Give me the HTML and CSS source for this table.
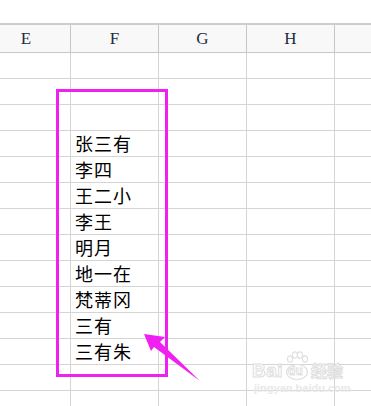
FILE: index.html
```html
<!DOCTYPE html>
<html lang="zh">
<head>
<meta charset="utf-8">
<link rel="stylesheet" href="styles.css">
</head>
<body>
<div class="sheet">
  <div class="topbar"></div>
  <div class="row head">
    <div class="cell c1">E</div>
    <div class="cell c2">F</div>
    <div class="cell c3">G</div>
    <div class="cell c4">H</div>
    <div class="cell c5"></div>
  </div>
  <div class="row"><div class="cell c1"></div><div class="cell c2"></div><div class="cell c3"></div><div class="cell c4"></div><div class="cell c5"></div></div>
  <div class="row"><div class="cell c1"></div><div class="cell c2"></div><div class="cell c3"></div><div class="cell c4"></div><div class="cell c5"></div></div>
  <div class="row"><div class="cell c1"></div><div class="cell c2"></div><div class="cell c3"></div><div class="cell c4"></div><div class="cell c5"></div></div>
  <div class="row"><div class="cell c1"></div><div class="cell c2 txt">张三有</div><div class="cell c3"></div><div class="cell c4"></div><div class="cell c5"></div></div>
  <div class="row"><div class="cell c1"></div><div class="cell c2 txt">李四</div><div class="cell c3"></div><div class="cell c4"></div><div class="cell c5"></div></div>
  <div class="row"><div class="cell c1"></div><div class="cell c2 txt">王二小</div><div class="cell c3"></div><div class="cell c4"></div><div class="cell c5"></div></div>
  <div class="row"><div class="cell c1"></div><div class="cell c2 txt">李王</div><div class="cell c3"></div><div class="cell c4"></div><div class="cell c5"></div></div>
  <div class="row"><div class="cell c1"></div><div class="cell c2 txt">明月</div><div class="cell c3"></div><div class="cell c4"></div><div class="cell c5"></div></div>
  <div class="row"><div class="cell c1"></div><div class="cell c2 txt">地一在</div><div class="cell c3"></div><div class="cell c4"></div><div class="cell c5"></div></div>
  <div class="row"><div class="cell c1"></div><div class="cell c2 txt">梵蒂冈</div><div class="cell c3"></div><div class="cell c4"></div><div class="cell c5"></div></div>
  <div class="row"><div class="cell c1"></div><div class="cell c2 txt">三有</div><div class="cell c3"></div><div class="cell c4"></div><div class="cell c5"></div></div>
  <div class="row"><div class="cell c1"></div><div class="cell c2 txt">三有朱</div><div class="cell c3"></div><div class="cell c4"></div><div class="cell c5"></div></div>
  <div class="row"><div class="cell c1"></div><div class="cell c2"></div><div class="cell c3"></div><div class="cell c4"></div><div class="cell c5"></div></div>
  <div class="row"><div class="cell c1"></div><div class="cell c2"></div><div class="cell c3"></div><div class="cell c4"></div><div class="cell c5"></div></div>

  <div class="highlight"></div>
  <svg class="arrow" width="371" height="406" viewBox="0 0 371 406">
    <polygon points="144,334 165,337 160,342 200,381 154,347 151,351" fill="#f020f0"/>
  </svg>
  <div class="watermark">
    <div class="wm-top">
      <span class="wm-bai">Bai</span>
      <span class="wm-paw">
        <svg width="24" height="30" viewBox="0 0 24 30">
          <g fill="none" stroke="#e0e0e0" stroke-width="1.2">
            <ellipse cx="5" cy="8" rx="2.6" ry="3.2"/>
            <ellipse cx="10" cy="4" rx="2.6" ry="3.2"/>
            <ellipse cx="15" cy="4" rx="2.6" ry="3.2"/>
            <ellipse cx="20" cy="8" rx="2.6" ry="3.2"/>
            <ellipse cx="12" cy="21" rx="10.5" ry="7.5"/>
          </g>
        </svg>
        <span class="wm-du">du</span>
      </span>
      <span class="wm-jy">经验</span>
    </div>
    <div class="wm-url">jingyan.baidu.com</div>
  </div>
</div>
</body>
</html>
```

FILE: styles.css
```css
html, body {
  margin: 0;
  padding: 0;
  background: #ffffff;
}
.sheet {
  position: relative;
  width: 371px;
  height: 406px;
  overflow: hidden;
}
.topbar {
  height: 23px;
  border-bottom: 2px solid #cccccc;
}
.row {
  display: flex;
  height: 26px;
}
.row.head {
  height: 28px;
  background: #f8f8f8;
}
.cell {
  box-sizing: border-box;
  height: 100%;
  border-right: 1px solid #d4d4d4;
  border-bottom: 1px solid #d4d4d4;
  flex: none;
}
.head .cell {
  border-color: #c6c6c6;
  font-family: "Liberation Serif", "DejaVu Serif", serif;
  font-size: 17px;
  color: #232b3c;
  display: flex;
  align-items: center;
  justify-content: center;
  padding-top: 1px;
}
.c1 { width: 71px; padding-left: 0; }
.head .c1 { padding-right: 18px; }
.c2, .c3, .c4 { width: 88px; }
.c5 { width: 37px; border-right: none; }
.txt {
  font-family: "Noto Sans CJK SC", "Noto Sans", sans-serif;
  font-size: 18px;
  letter-spacing: 1px;
  color: #000000;
  padding-left: 4px;
  padding-top: 0;
  line-height: 25px;
  font-weight: 400;
}
.highlight {
  position: absolute;
  left: 56px;
  top: 89px;
  width: 106px;
  height: 282px;
  border: 3px solid #f020f0;
}
.arrow {
  position: absolute;
  left: 0;
  top: 0;
}
.watermark {
  position: absolute;
  left: 252px;
  top: 349px;
  color: #e6e6e6;
  font-family: "Liberation Sans", "Noto Sans CJK SC", sans-serif;
}
.wm-top {
  display: flex;
  align-items: flex-end;
  height: 32px;
}
.wm-bai {
  font-size: 19px;
  font-weight: bold;
  line-height: 20px;
  letter-spacing: 0.5px;
  color: #ffffff;
  -webkit-text-stroke: 1px #dedede;
}
.wm-paw {
  position: relative;
  width: 24px;
  height: 30px;
  margin-left: 2px;
}
.wm-paw svg {
  display: block;
}
.wm-du {
  position: absolute;
  left: 3px;
  top: 13px;
  font-size: 12px;
  font-weight: bold;
  color: #ffffff;
  -webkit-text-stroke: 0.8px #dcdcdc;
}
.wm-jy {
  font-family: "Noto Sans CJK SC", sans-serif;
  font-size: 16px;
  font-weight: bold;
  line-height: 22px;
  margin-left: 2px;
  color: #ffffff;
  -webkit-text-stroke: 1px #dedede;
}
.wm-url {
  font-size: 11px;
  font-weight: bold;
  color: #e8e8e8;
  margin-top: 1px;
  margin-left: 2px;
}
```
